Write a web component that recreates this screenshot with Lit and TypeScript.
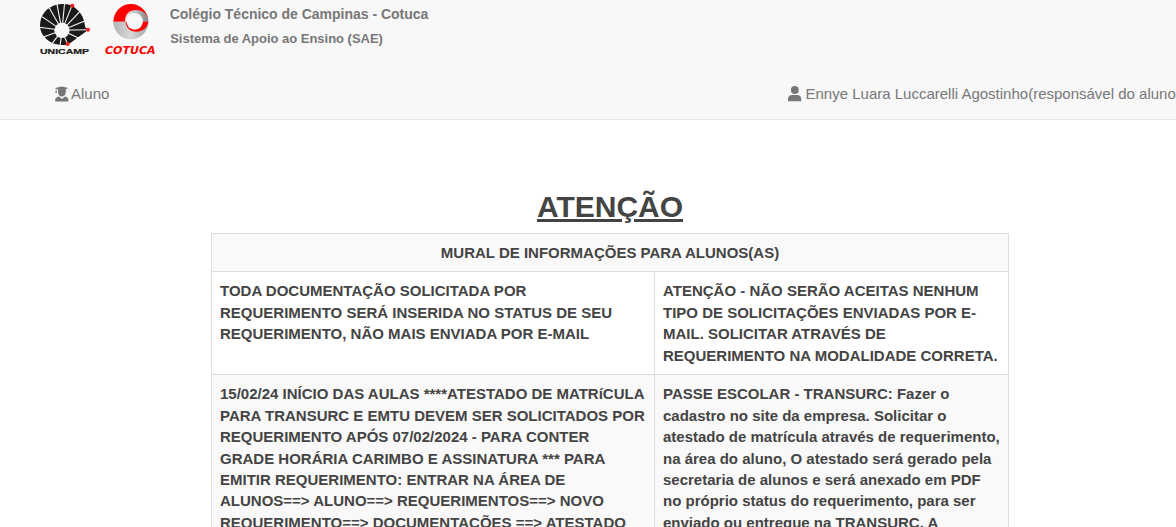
import { LitElement, html, css, svg } from "lit";
import { customElement } from "lit/decorators.js";

const SPOKES = [
  [28, 82], [36, 50], [56, 20], [80, 8], [104, 6], [127, 14], [150, 34], [166, 62],
  [174, 89], [150, 116], [113, 134], [90, 140], [64, 134], [38, 112],
];

@customElement("unicamp-logo")
export class UnicampLogo extends LitElement {
  static styles = css`
    :host { display: block; width: 50px; height: 52px; }
    svg { display: block; overflow: visible; }
  `;
  render() {
    return html`<svg width="50" height="52" viewBox="30 9 150 156" role="img" aria-label="Unicamp">
      <path d="M95 12C110 11 121 14 127 18C147 30 161 48 164 72L166 82L174 89L166 96L124 127L113 134C90 138 64 133 47 115C32 100 28 84 31 66C35 36 62 13 95 12Z" fill="#1c1a18"/>
      ${SPOKES.map(([x, y]) => svg`<path d="M96 91L${x} ${y}" stroke="#f8f8f8" stroke-width="3.2"/>`)}
      <circle cx="96" cy="91" r="23" fill="#f8f8f8"/>
      <circle cx="127" cy="17" r="6" fill="#f4201c"/>
      <circle cx="174" cy="89" r="6" fill="#f4201c"/>
      <circle cx="113" cy="132" r="6" fill="#f4201c"/>
      <text x="30" y="161" textLength="147" lengthAdjust="spacingAndGlyphs" font-family="Liberation Sans, Arial, sans-serif" font-weight="700" font-size="20" fill="#1c1a18" stroke="#1c1a18" stroke-width=".6">UNICAMP</text>
    </svg>`;
  }
}

@customElement("cotuca-logo")
export class CotucaLogo extends LitElement {
  static styles = css`
    :host { display: block; width: 52px; height: 52px; }
    svg { display: block; overflow: visible; }
  `;
  render() {
    return html`<svg width="52" height="52" viewBox="20 9 156 156" role="img" aria-label="Cotuca">
      <defs>
        <linearGradient id="outer" x1="0" y1="0" x2="1" y2="0">
          <stop offset="0" stop-color="#b4b4b4"/><stop offset=".5" stop-color="#d8d8d8"/><stop offset="1" stop-color="#a4a4a4"/>
        </linearGradient>
        <linearGradient id="inner" x1="0" y1="0" x2="1" y2="0">
          <stop offset="0" stop-color="#eee"/><stop offset="1" stop-color="#858585"/>
        </linearGradient>
      </defs>
      <path d="M45 65A52.5 53 0 0 1 150 65Z" fill="#fe0000"/>
      <path d="M45 65A52.5 53 0 0 0 150 65Z" fill="url(#outer)"/>
      <path d="M80 65C80 41 94 30 113 30C134 30 149 43 150 65Z" fill="url(#inner)"/>
      <path d="M82 65H150C148 82 133 95 114 95C96 95 82 83 82 65Z" fill="#fe0000"/>
      <circle cx="109" cy="64" r="25" fill="#f8f8f8"/>
      <text x="20" y="161" textLength="152" lengthAdjust="spacingAndGlyphs" font-family="DejaVu Sans, sans-serif" font-style="oblique" font-weight="700" font-size="34" fill="#fe0000">COTUCA</text>
    </svg>`;
  }
}

@customElement("app-root")
export class AppRoot extends LitElement {
  static styles = css`
    :host {
      display: block; height: 527px; overflow: hidden; background: #fff; color: #444;
      font: 15px/21.43px "Liberation Sans", Arial, sans-serif;
    }
    .navbar { box-sizing: border-box; height: 120px; background: #f8f8f8; border-bottom: 1px solid #e7e7e7; color: #777; }
    .brand { display: flex; height: 68px; padding: 3px 0 0 40px; box-sizing: border-box; }
    .cotuca { margin-left: 14.7px; }
    .titles { margin-left: 13px; font-weight: 700; white-space: nowrap; }
    .college { font-size: 14px; line-height: 22px; letter-spacing: -.01px; }
    .system { font-size: 13px; line-height: 24px; padding: 2px 0 0 .5px; letter-spacing: -.02px; }
    .menu { display: flex; justify-content: space-between; height: 51px; padding-left: 55px; align-items: center; box-sizing: border-box; }
    .item { display: flex; align-items: center; white-space: nowrap; }
    .student { gap: 2px; }
    .user { gap: 4px; width: 388.5px; flex: none; overflow: hidden; }
    .icon { display: block; flex: none; fill: currentColor; }
    main { width: 798px; margin: 0 0 0 211px; padding-top: 70px; }
    h1 { margin: 0 0 9px; font-size: 30px; line-height: 34px; text-align: center; text-decoration: underline; text-decoration-thickness: 3px; }
    table { width: 798px; table-layout: fixed; border-collapse: collapse; font-weight: 700; white-space: nowrap; }
    .wide { width: 443px; }
    td, th { border: 1px solid #ddd; padding: 8px; vertical-align: top; text-align: left; }
    th { text-align: center; }
    tr:nth-child(odd) { background: #f9f9f9; }
  `;

  private lines(rows: string[]) {
    return rows.map((row, i) => (i ? html`<br>${row}` : row));
  }

  render() {
    return html`
      <header class="navbar">
        <div class="brand">
          <unicamp-logo></unicamp-logo>
          <cotuca-logo class="cotuca"></cotuca-logo>
          <div class="titles">
            <div class="college">Colégio Técnico de Campinas - Cotuca</div>
            <div class="system">Sistema de Apoio ao Ensino (SAE)</div>
          </div>
        </div>
        <nav class="menu">
          <div class="item student">
            <svg class="icon" width="14" height="16" viewBox="0 0 14 16">
              <path d="M0 2L7 .4L13.3 2L10.8 3.3V6.2C10.6 9 8.8 10.4 7 10.4S3.2 9 3 6.2V3.3L1.5 2.8V5L2.1 7H.1L.8 5V2.6Z"/>
              <path d="M.2 15.5V13.8Q.4 11.2 4 10.5L7 13L10 10.5Q13.2 11.2 13.3 13.8V15.5Z"/>
            </svg>
            <span>Aluno</span>
          </div>
          <div class="item user">
            <svg class="icon" width="14" height="16" viewBox="0 0 14 16">
              <circle cx="6.8" cy="4" r="3.9"/>
              <path d="M0 15.2V13Q.2 9 4.4 9H9Q13 9 13.2 13V15.2Z"/>
            </svg>
            <span>Ennye Luara Luccarelli Agostinho(responsável do aluno</span>
          </div>
        </nav>
      </header>
      <main>
        <h1>ATENÇÃO</h1>
        <table>
          <colgroup><col class="wide"><col></colgroup>
          <tbody>
            <tr><th colspan="2">MURAL DE INFORMAÇÕES PARA ALUNOS(AS)</th></tr>
            <tr>
              <td>${this.lines(["TODA DOCUMENTAÇÃO SOLICITADA POR", "REQUERIMENTO SERÁ INSERIDA NO STATUS DE SEU", "REQUERIMENTO, NÃO MAIS ENVIADA POR E-MAIL"])}</td>
              <td>${this.lines(["ATENÇÃO - NÃO SERÃO ACEITAS NENHUM", "TIPO DE SOLICITAÇÕES ENVIADAS POR E-", "MAIL. SOLICITAR ATRAVÉS DE", "REQUERIMENTO NA MODALIDADE CORRETA."])}</td>
            </tr>
            <tr>
              <td>${this.lines(["15/02/24 INÍCIO DAS AULAS ****ATESTADO DE MATRíCULA", "PARA TRANSURC E EMTU DEVEM SER SOLICITADOS POR", "REQUERIMENTO APÓS 07/02/2024 - PARA CONTER", "GRADE HORÁRIA CARIMBO E ASSINATURA *** PARA", "EMITIR REQUERIMENTO: ENTRAR NA ÁREA DE", "ALUNOS==> ALUNO==> REQUERIMENTOS==> NOVO", "REQUERIMENTO==> DOCUMENTAÇÕES ==> ATESTADO"])}</td>
              <td>${this.lines(["PASSE ESCOLAR - TRANSURC: Fazer o", "cadastro no site da empresa. Solicitar o", "atestado de matrícula através de requerimento,", "na área do aluno, O atestado será gerado pela", "secretaria de alunos e será anexado em PDF", "no próprio status do requerimento, para ser", "enviado ou entregue na TRANSURC. A"])}</td>
            </tr>
          </tbody>
        </table>
      </main>
    `;
  }
}
